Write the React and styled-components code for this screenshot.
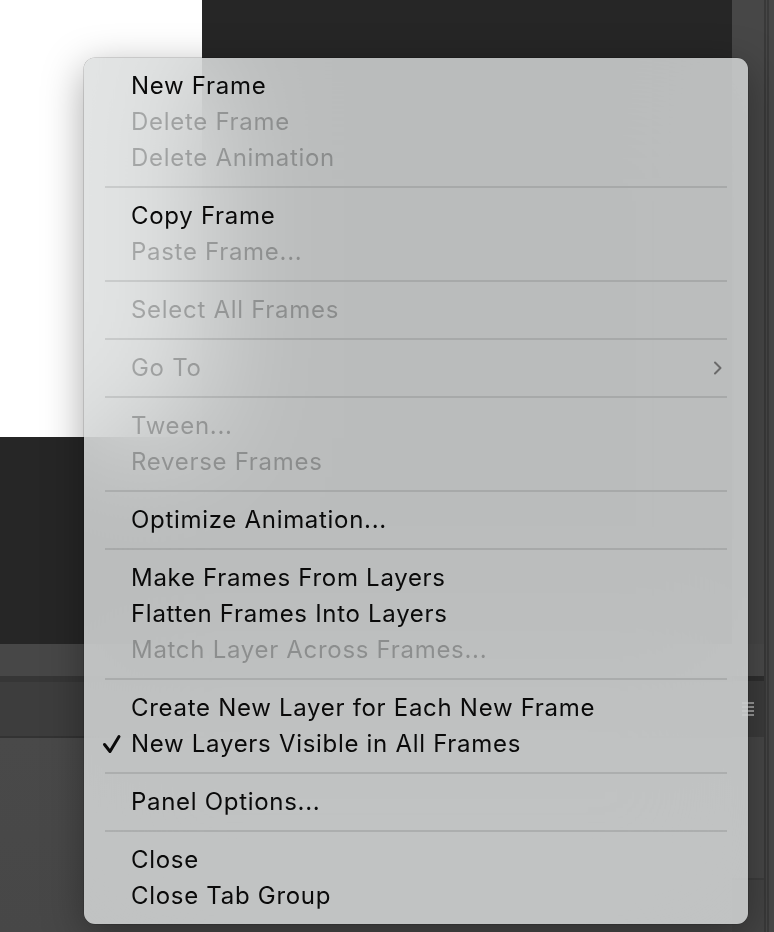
import React from 'react';
import styled, { createGlobalStyle } from 'styled-components';

const GlobalStyle = createGlobalStyle`
  html, body {
    margin: 0;
    padding: 0;
    background: #262626;
  }
  * { box-sizing: border-box; }
`;

const Page = styled.div`
  position: relative;
  width: 774px;
  height: 932px;
  overflow: hidden;
  display: grid;
  grid-template-columns: 732px 42px;
  font-family: "Inter", "Noto Sans", sans-serif;
`;

const Main = styled.div`
  display: flex;
  flex-direction: column;
`;

const Workspace = styled.div`
  height: 644px;
  background: #262626;
`;

const Canvas = styled.div`
  width: 202px;
  height: 437px;
  background: #ffffff;
`;

const TabBar = styled.div`
  height: 32px;
  background: #474747;
`;

const Divider = styled.div`
  height: ${(p) => p.h || 2}px;
  background: ${(p) => p.c || '#333333'};
`;

const PanelHeader = styled.div`
  height: 54px;
  background: #3d3d3d;
`;

const PanelBody = styled.div`
  flex: 1;
  background: linear-gradient(#494949, #474747);
`;

const Strip = styled.div`
  display: flex;
  flex-direction: column;
  background: #474747;
  position: relative;
`;

const StripBlock = styled.div`
  height: ${(p) => p.h}px;
  flex: ${(p) => (p.grow ? 1 : 'none')};
  background: ${(p) => p.c};
  display: flex;
  align-items: center;
  padding-left: 10px;
  border-right: 2px solid #393939;
  margin-right: 8px;
`;

const Rail = styled.div`
  position: absolute;
  top: 0;
  bottom: 0;
  right: 5px;
  width: 2px;
  background: #3a3a3a;
`;

const Menu = styled.div`
  position: absolute;
  left: 84px;
  top: 58px;
  width: 664px;
  padding: 10px 21px 10px;
  border-radius: 11px;
  background: rgba(220, 222, 222, 0.82);
  backdrop-filter: blur(60px);
  -webkit-backdrop-filter: blur(60px);
  box-shadow: 0 0 0 0.5px rgba(0, 0, 0, 0.25), 0 10px 40px rgba(0, 0, 0, 0.35);
  display: flex;
  flex-direction: column;
`;

const Item = styled.div`
  position: relative;
  height: 36px;
  line-height: 36px;
  padding-left: 26px;
  font-size: 24px;
  letter-spacing: 0.7px;
  color: ${(p) => (p.disabled ? 'rgba(0, 0, 0, 0.26)' : '#0a0a0a')};
  display: flex;
  align-items: center;
  justify-content: space-between;
  white-space: nowrap;
`;

const Check = styled.svg`
  position: absolute;
  left: -3px;
  top: 8px;
`;

const Chevron = styled.svg`
  margin-right: 4px;
`;

const Separator = styled.div`
  height: 2px;
  margin: 10px 0 10px;
  background: rgba(0, 0, 0, 0.1);
`;

const Hamburger = styled.svg`
  display: block;
`;

const groups = [
  [
    { label: 'New Frame' },
    { label: 'Delete Frame', disabled: true },
    { label: 'Delete Animation', disabled: true },
  ],
  [
    { label: 'Copy Frame' },
    { label: 'Paste Frame...', disabled: true },
  ],
  [{ label: 'Select All Frames', disabled: true }],
  [{ label: 'Go To', disabled: true, submenu: true }],
  [
    { label: 'Tween...', disabled: true },
    { label: 'Reverse Frames', disabled: true },
  ],
  [{ label: 'Optimize Animation...' }],
  [
    { label: 'Make Frames From Layers' },
    { label: 'Flatten Frames Into Layers' },
    { label: 'Match Layer Across Frames...', disabled: true },
  ],
  [
    { label: 'Create New Layer for Each New Frame' },
    { label: 'New Layers Visible in All Frames', checked: true },
  ],
  [{ label: 'Panel Options...' }],
  [{ label: 'Close' }, { label: 'Close Tab Group' }],
];

const MenuItem = ({ item }) => (
  <Item disabled={item.disabled}>
    {item.checked && (
      <Check width="20" height="20" viewBox="0 0 20 20">
        <path
          d="M2.5 10.5 L8 17.5 L17 2.5"
          fill="none"
          stroke="#0a0a0a"
          strokeWidth="3"
          strokeLinecap="round"
          strokeLinejoin="round"
        />
      </Check>
    )}
    <span>{item.label}</span>
    {item.submenu && (
      <Chevron width="10" height="14" viewBox="0 0 10 14">
        <path
          d="M2 1.5 L7.5 7 L2 12.5"
          fill="none"
          stroke="#6a6a6a"
          strokeWidth="2"
          strokeLinecap="round"
          strokeLinejoin="round"
        />
      </Chevron>
    )}
  </Item>
);

const App = () => {
  return (
    <>
      <GlobalStyle />
      <Page>
        <Main>
          <Workspace>
            <Canvas />
          </Workspace>
          <TabBar />
          <Divider h={6} c="#363636" />
          <PanelHeader />
          <Divider h={2} c="#333333" />
          <PanelBody />
        </Main>

        <Strip>
          <StripBlock h={644} c="#474747" />
          <StripBlock h={32} c="#4a4a4a" />
          <StripBlock h={5} c="#2f2f2f" />
          <StripBlock h={56} c="#3c3c3c">
            <Hamburger width="12" height="14" viewBox="0 0 12 14">
              <rect x="0" y="0" width="12" height="2" fill="#9a9a9a" />
              <rect x="0" y="4" width="12" height="2" fill="#9a9a9a" />
              <rect x="0" y="8" width="12" height="2" fill="#9a9a9a" />
              <rect x="0" y="12" width="12" height="2" fill="#9a9a9a" />
            </Hamburger>
          </StripBlock>
          <StripBlock h={141} c="#474747" />
          <StripBlock h={2} c="#3d3d3d" />
          <StripBlock grow c="#444444" />
          <Rail />
        </Strip>

        {/* Flyout menu of the Timeline panel */}
        <Menu>
          {groups.map((group, gi) => (
            <React.Fragment key={gi}>
              {gi > 0 && <Separator />}
              {group.map((item) => (
                <MenuItem key={item.label} item={item} />
              ))}
            </React.Fragment>
          ))}
        </Menu>
      </Page>
    </>
  );
};

export default App;
